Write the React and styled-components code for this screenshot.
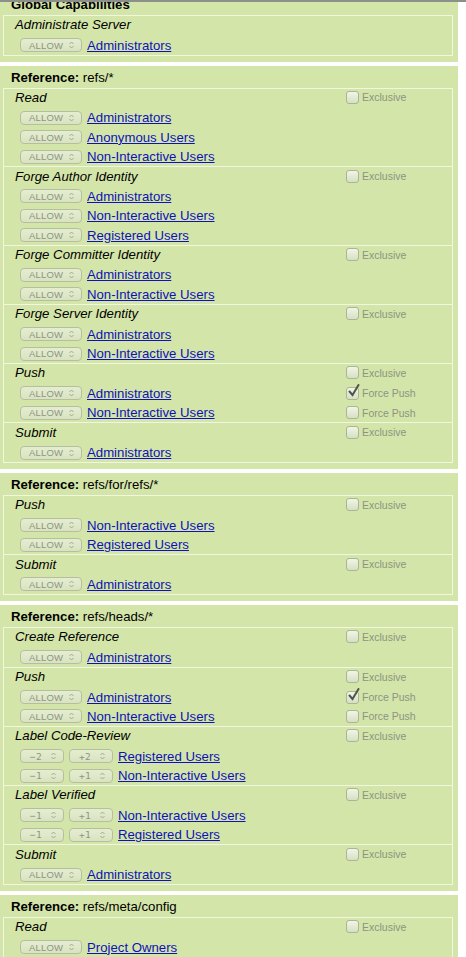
import * as React from 'react';
import styled, { createGlobalStyle } from 'styled-components';

const GlobalStyle = createGlobalStyle`
    html, body {
        margin: 0;
        padding: 0;
        background: #fff;
        font-family: "Liberation Sans", Arial, sans-serif;
        font-size: 13px;
        color: #000;
        overflow: hidden;
    }
`;

const TopEdge = styled.div`
    position: fixed;
    top: 0;
    left: 0;
    right: 0;
    height: 2px;
    background: #8d8f8a;
    z-index: 2;
`;

const Page = styled.div`
    width: 458px;
    margin-top: -7px;
    display: flex;
    flex-direction: column;
    gap: 4px;
`;

const Panel = styled.section`
    background: #d4e5a9;
    padding: 0 5px 6px 3px;
`;

const Heading = styled.div`
    height: 22px;
    line-height: 22px;
    padding: 1px 0 0 8px;
    box-sizing: border-box;
    font-size: 13.2px;
    b {
        font-weight: bold;
    }
`;

const Inner = styled.div`
    border: 1px solid #f1f7df;
`;

const Block = styled.div`
    & + & {
        border-top: 1px solid #f1f7df;
    }
`;

const Line = styled.div`
    height: 19.4px;
    display: flex;
    align-items: center;
`;

const Title = styled.div`
    flex: 1;
    padding: 0 0 2px 11px;
    font-style: italic;
    font-size: 13.2px;
`;

const RuleLeft = styled.div`
    flex: 1;
    display: flex;
    align-items: center;
    gap: 5px;
    padding-left: 16px;
`;

const Side = styled.label`
    width: 106px;
    display: flex;
    align-items: center;
    gap: 3px;
    color: #8c9482;
    font-size: 10.5px;
    padding-bottom: ${p => (p.$title ? '2px' : '0')};
`;

const Box = styled.span`
    position: relative;
    width: 11px;
    height: 11px;
    border-radius: 3px;
    border: 1px solid #aab596;
    background: linear-gradient(#f1f5e6, #d6e0c3);
    svg {
        position: absolute;
        left: 1px;
        top: -4px;
    }
`;

const Select = styled.span`
    width: ${p => p.$w}px;
    height: 14px;
    box-sizing: border-box;
    border: 1px solid #b5bfa0;
    border-radius: 4px;
    background: linear-gradient(#e5edd0, #d9e3c0);
    display: flex;
    align-items: center;
    justify-content: space-between;
    padding: 0 7px 0 ${p => p.$pad}px;
    color: #8d9585;
    font-size: 9.5px;
    letter-spacing: 0.2px;
    font-family: ${p => (p.$mono ? '"DejaVu Sans Mono", monospace' : '"Liberation Sans", Arial, sans-serif')};
`;

const Group = styled.a`
    color: #0e12b8;
    text-decoration: underline;
    font-size: 13.2px;
`;

const Arrows = () => (
    <svg width="5" height="8" viewBox="0 0 5 8">
        <path d="M0.5 3 L2.5 1 L4.5 3 M0.5 5 L2.5 7 L4.5 5" fill="none" stroke="#9aa38f" strokeWidth="0.9" />
    </svg>
);

const Check = ({ checked, children, title }) => (
    <Side $title={title}>
        <Box>
            {checked && (
                <svg width="12" height="13" viewBox="0 0 12 13">
                    <path d="M1.5 7.5 L4.5 11 L10.5 1" fill="none" stroke="#4f554a" strokeWidth="2" strokeLinecap="round" />
                </svg>
            )}
        </Box>
        {children}
    </Side>
);

const Rule = ({ rule }) => (
    <Line>
        <RuleLeft>
            {rule.range ? (
                <>
                    <Select $w={44} $pad={9} $mono>{rule.range[0]}<Arrows /></Select>
                    <Select $w={44} $pad={9} $mono>{rule.range[1]}<Arrows /></Select>
                </>
            ) : (
                <Select $w={62} $pad={8}>ALLOW<Arrows /></Select>
            )}
            <Group href="#">{rule.group}</Group>
        </RuleLeft>
        {rule.force !== undefined && <Check checked={rule.force}>Force Push</Check>}
    </Line>
);

const r = (group, extra = {}) => ({ group, ...extra });

const sections = [
    {
        global: true,
        blocks: [{ name: 'Administrate Server', noExclusive: true, rules: [r('Administrators')] }],
    },
    {
        ref: 'refs/*',
        blocks: [
            { name: 'Read', rules: [r('Administrators'), r('Anonymous Users'), r('Non-Interactive Users')] },
            { name: 'Forge Author Identity', rules: [r('Administrators'), r('Non-Interactive Users'), r('Registered Users')] },
            { name: 'Forge Committer Identity', rules: [r('Administrators'), r('Non-Interactive Users')] },
            { name: 'Forge Server Identity', rules: [r('Administrators'), r('Non-Interactive Users')] },
            { name: 'Push', rules: [r('Administrators', { force: true }), r('Non-Interactive Users', { force: false })] },
            { name: 'Submit', rules: [r('Administrators')] },
        ],
    },
    {
        ref: 'refs/for/refs/*',
        blocks: [
            { name: 'Push', rules: [r('Non-Interactive Users'), r('Registered Users')] },
            { name: 'Submit', rules: [r('Administrators')] },
        ],
    },
    {
        ref: 'refs/heads/*',
        blocks: [
            { name: 'Create Reference', rules: [r('Administrators')] },
            { name: 'Push', rules: [r('Administrators', { force: true }), r('Non-Interactive Users', { force: false })] },
            {
                name: 'Label Code-Review',
                rules: [
                    r('Registered Users', { range: ['\u22122', '+2'] }),
                    r('Non-Interactive Users', { range: ['\u22121', '+1'] }),
                ],
            },
            {
                name: 'Label Verified',
                rules: [
                    r('Non-Interactive Users', { range: ['\u22121', '+1'] }),
                    r('Registered Users', { range: ['\u22121', '+1'] }),
                ],
            },
            { name: 'Submit', rules: [r('Administrators')] },
        ],
    },
    {
        ref: 'refs/meta/config',
        blocks: [{ name: 'Read', rules: [r('Project Owners')] }],
    },
];

export default function App() {
    return (
        <>
            <GlobalStyle />
            <TopEdge />
            <Page>
                {sections.map((s, i) => (
                    <Panel key={i}>
                        <Heading>
                            {s.global ? <b>Global Capabilities</b> : <><b>Reference:</b> {s.ref}</>}
                        </Heading>
                        <Inner>
                            {s.blocks.map((b, j) => (
                                <Block key={j}>
                                    <Line>
                                        <Title>{b.name}</Title>
                                        {!b.noExclusive && <Check title>Exclusive</Check>}
                                    </Line>
                                    {b.rules.map((rule, k) => (
                                        <Rule key={k} rule={rule} />
                                    ))}
                                </Block>
                            ))}
                        </Inner>
                    </Panel>
                ))}
            </Page>
        </>
    );
}
